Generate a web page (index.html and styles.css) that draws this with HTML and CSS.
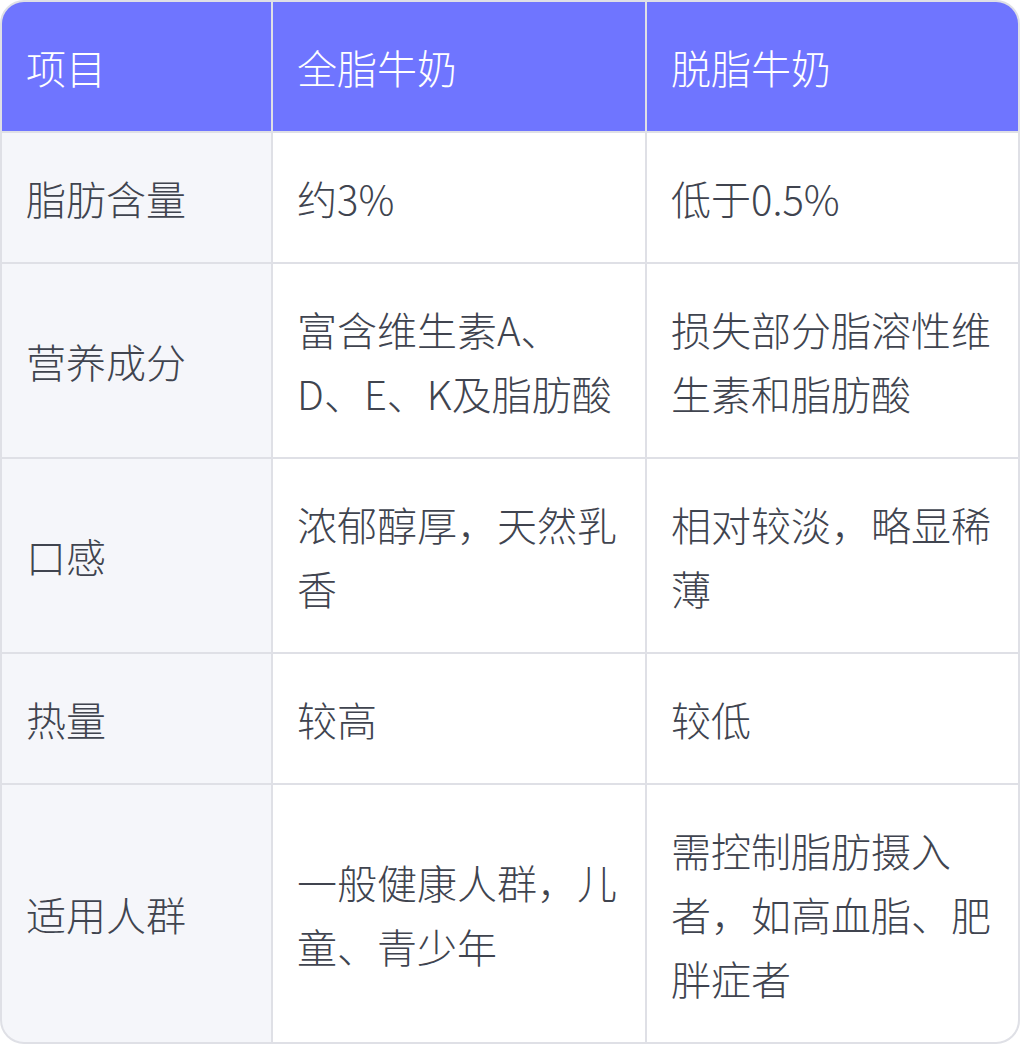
FILE: index.html
```html
<!DOCTYPE html>
<html lang="zh-CN">
<head>
<meta charset="utf-8">
<title>全脂牛奶与脱脂牛奶对比</title>
<link rel="stylesheet" href="styles.css">
</head>
<body>
<div class="table">
  <div class="cell head">项目</div>
  <div class="cell head">全脂牛奶</div>
  <div class="cell head">脱脂牛奶</div>

  <div class="cell label">脂肪含量</div>
  <div class="cell">约3%</div>
  <div class="cell">低于0.5%</div>

  <div class="cell label">营养成分</div>
  <div class="cell">富含维生素A、D、E、K及脂肪酸</div>
  <div class="cell">损失部分脂溶性维生素和脂肪酸</div>

  <div class="cell label">口感</div>
  <div class="cell">浓郁醇厚，天然乳香</div>
  <div class="cell">相对较淡，略显稀薄</div>

  <div class="cell label">热量</div>
  <div class="cell">较高</div>
  <div class="cell">较低</div>

  <div class="cell label">适用人群</div>
  <div class="cell">一般健康人群，儿童、青少年</div>
  <div class="cell">需控制脂肪摄入者，如高血脂、肥胖症者</div>
</div>
</body>
</html>
```
FILE: styles.css
```css
html, body {
  margin: 0;
  padding: 0;
  background: #ffffff;
}

body {
  font-family: "Noto Sans CJK SC Light", "Noto Sans CJK SC DemiLight", "Noto Sans CJK SC", "Noto Sans", sans-serif;
  font-weight: 200;
}

.table {
  width: 1020px;
  box-sizing: border-box;
  border: 2px solid #dfe0e6;
  border-radius: 24px;
  overflow: hidden;
  background: #dfe0e6;
  display: grid;
  grid-template-columns: 269px 372px 1fr;
  gap: 2px;
}

.cell {
  display: flex;
  align-items: center;
  padding: 32.5px 24px;
  font-size: 40px;
  line-height: 64px;
  color: #40444f;
  background: #ffffff;
  word-break: normal;
  line-break: strict;
}

.head {
  background: #6f75ff;
  color: #ffffff;
}

.label {
  background: #f5f6fa;
}
```
